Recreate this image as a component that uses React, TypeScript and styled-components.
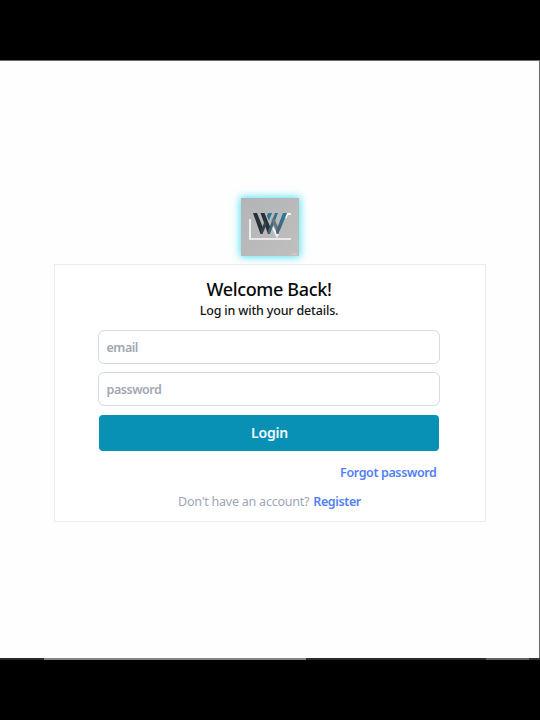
import React from "react";
import styled, { createGlobalStyle } from "styled-components";

const GlobalStyle = createGlobalStyle`
  * { box-sizing: border-box; }
  body { margin: 0; background: #000; font-family: "Noto Sans", "Open Sans", sans-serif; }
`;

const Screen = styled.div`
  width: 540px;
  height: 720px;
  padding: 60px 0;
  background: #000;
  display: flex;
  flex-direction: column;
  overflow: hidden;
`;

const Page = styled.main`
  height: 598px;
  flex: none;
  background: #fefefe;
  border-top: 1px solid #6c6a6b;
  border-right: 1px solid #6c6a6b;
  display: flex;
  flex-direction: column;
  align-items: center;
  padding-top: 137px;
`;

const Taskbar = styled.div`
  height: 2px;
  flex: none;
  display: grid;
  grid-template-columns: 44px 262px 180px 43px 1fr;
`;

const Segment = styled.span<{ $tone: string }>`
  background: ${(p) => p.$tone};
`;

const Logo = styled.svg`
  display: block;
  flex: none;
  width: 58px;
  height: 58px;
  box-shadow: 0 0 8px 1px #4fe0f5;
`;

const Card = styled.form`
  width: 432px;
  height: 258px;
  flex: none;
  margin-top: 8px;
  border: 1px solid #ececef;
  background: #fff;
  padding: 12px 44px 0 43px;
  display: flex;
  flex-direction: column;
`;

const Title = styled.h1`
  margin: 0;
  text-align: center;
  font-size: 18px;
  line-height: 24px;
  font-weight: 500;
  letter-spacing: -0.35px;
  color: #090909;
`;

const Subtitle = styled.p`
  margin: 0 0 10px;
  text-align: center;
  font-size: 12.5px;
  line-height: 19px;
  font-weight: 500;
  letter-spacing: -0.17px;
  color: #151515;
`;

const Field = styled.input`
  width: 342px;
  height: 34px;
  flex: none;
  margin: 0 0 8px;
  padding: 0 8px;
  border: 1px solid #d3dce7;
  border-radius: 6px;
  background: #fff;
  font: 600 12.5px "Noto Sans", sans-serif;
  letter-spacing: -0.45px;
  outline: none;
  &::placeholder { color: #a2a6b4; opacity: 1; }
`;

const LoginButton = styled.button`
  width: 340px;
  height: 36px;
  flex: none;
  margin: 1px 0 0 1px;
  padding: 0 0 2px 2px;
  border: 0;
  border-radius: 4px;
  background: #0891b5;
  color: #f2fbfd;
  font: 600 14px "Noto Sans", sans-serif;
  letter-spacing: -0.2px;
`;

const ForgotRow = styled.div`
  display: flex;
  justify-content: flex-end;
  padding-right: 4px;
  margin-top: 13px;
  line-height: 18px;
`;

const Link = styled.a`
  color: #5180f5;
  font-size: 12.5px;
  font-weight: 600;
  letter-spacing: -0.38px;
`;

const RegisterRow = styled.p`
  margin: 11px 0 0;
  padding-left: 1px;
  display: flex;
  justify-content: center;
  gap: 4px;
  line-height: 18px;
  font-size: 12.5px;
  letter-spacing: -0.23px;
  color: #9ba6b8;
`;

function BrandLogo() {
  return (
    <Logo viewBox="0 0 58 58" aria-label="W logo">
      <defs>
        <linearGradient id="plate" x1="0" y1="0" x2="1" y2="1">
          <stop offset="0" stopColor="#b2b4b6" />
          <stop offset="0.5" stopColor="#b9b9ba" />
          <stop offset="1" stopColor="#c1bfbf" />
        </linearGradient>
        <linearGradient id="steel" x1="0" y1="0" x2="0" y2="1">
          <stop offset="0" stopColor="#26799a" />
          <stop offset="1" stopColor="#4f606c" />
        </linearGradient>
      </defs>
      <rect width="58" height="58" fill="url(#plate)" />
      <path d="M9 21V41H50" fill="none" stroke="#f6f7f8" strokeWidth="1.7" />
      <path d="M50 16H46.5L44.5 20" fill="none" stroke="#f6f7f8" strokeWidth="1.8" />
      <path d="M30.5 27L36 38L38.5 32" fill="none" stroke="#edf4f8" strokeWidth="1.8" />
      <path d="M12 15H16L22.5 31L20.5 36H19.5Z" fill="#263139" />
      <path d="M19.5 15H23.5L30 31L28 36H27Z" fill="#263139" />
      <path d="M20 32L24 22.5L25.5 26.5L21.5 36H20Z" fill="#34414a" />
      <path d="M27 15H31L28 22.5L26 18Z" fill="#287998" />
      <path d="M27 33L34 15H37L29 36H27.5Z" fill="url(#steel)" />
      <path d="M30.5 22L32.5 19L38 31L36.5 36Z" fill="#68757e" />
      <path d="M42 15H46L37.5 36H35.5L35 33Z" fill="url(#steel)" />
      <path d="M51 56H56" stroke="#d5d5d6" />
    </Logo>
  );
}

export default function App() {
  return (
    <>
      <GlobalStyle />
      <Screen>
        <Page>
          <BrandLogo />
          <Card>
            <Title>Welcome Back!</Title>
            <Subtitle>Log in with your details.</Subtitle>
            <Field type="email" placeholder="email" />
            <Field type="password" placeholder="password" />
            <LoginButton type="button">Login</LoginButton>
            <ForgotRow>
              <Link>Forgot password</Link>
            </ForgotRow>
            <RegisterRow>
              <span>Don't have an account?</span>
              <Link>Register</Link>
            </RegisterRow>
          </Card>
        </Page>
        <Taskbar>
          <Segment $tone="#252c27" />
          <Segment $tone="#858585" />
          <Segment $tone="#292d2a" />
          <Segment $tone="#646263" />
          <Segment $tone="#343334" />
        </Taskbar>
      </Screen>
    </>
  );
}
